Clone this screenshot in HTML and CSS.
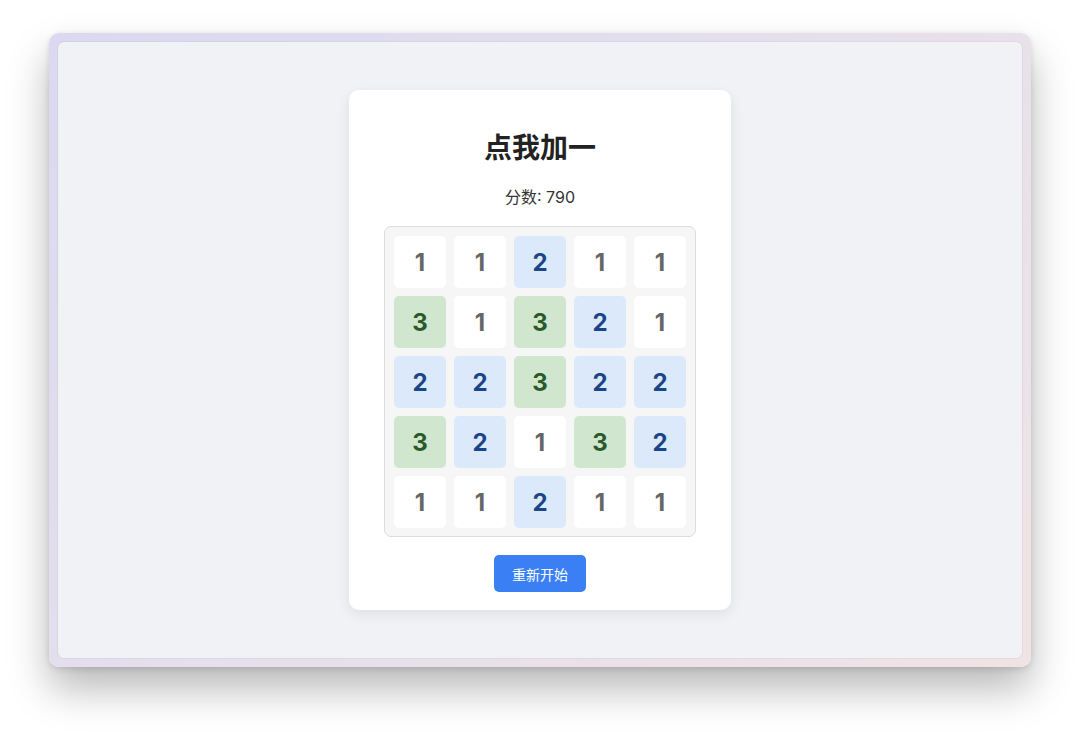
FILE: index.html
```html
<!DOCTYPE html>
<html lang="zh">
<head>
<meta charset="utf-8">
<title>点我加一</title>
<link rel="stylesheet" href="styles.css">
</head>
<body>
<div class="frame">
  <div class="screen">
    <div class="card">
      <h1 class="title">点我加一</h1>
      <div class="score">分数: 790</div>
      <div class="grid">
        <div class="cell c1">1</div><div class="cell c1">1</div><div class="cell c2">2</div><div class="cell c1">1</div><div class="cell c1">1</div>
        <div class="cell c3">3</div><div class="cell c1">1</div><div class="cell c3">3</div><div class="cell c2">2</div><div class="cell c1">1</div>
        <div class="cell c2">2</div><div class="cell c2">2</div><div class="cell c3">3</div><div class="cell c2">2</div><div class="cell c2">2</div>
        <div class="cell c3">3</div><div class="cell c2">2</div><div class="cell c1">1</div><div class="cell c3">3</div><div class="cell c2">2</div>
        <div class="cell c1">1</div><div class="cell c1">1</div><div class="cell c2">2</div><div class="cell c1">1</div><div class="cell c1">1</div>
      </div>
      <button class="restart">重新开始</button>
    </div>
  </div>
</div>
</body>
</html>
```
FILE: styles.css
```css
html, body {
  margin: 0;
  padding: 0;
  background: #ffffff;
}
body {
  width: 1080px;
  height: 732px;
  overflow: hidden;
  font-family: "Inter", "Noto Sans CJK SC", sans-serif;
  padding: 33px 0 0 49px;
  box-sizing: border-box;
}
.frame {
  width: 982px;
  height: 634px;
  box-sizing: border-box;
  padding: 9px;
  border-radius: 10px;
  background: linear-gradient(135deg, #dbd8f0 0%, #e6e0ec 50%, #f0e3e4 100%);
  box-shadow: 0 22px 40px rgba(0, 0, 0, 0.28), 0 2px 6px rgba(0, 0, 0, 0.12);
}
.screen {
  width: 100%;
  height: 100%;
  background: #f0f2f5;
  border-radius: 6px;
  box-shadow: 0 0 0 1px rgba(0, 0, 0, 0.04);
  display: flex;
  align-items: center;
  justify-content: center;
}
.card {
  width: 382px;
  height: 520px;
  box-sizing: border-box;
  background: #ffffff;
  border-radius: 10px;
  box-shadow: 0 4px 14px rgba(0, 0, 0, 0.08);
  display: flex;
  flex-direction: column;
  align-items: center;
  padding-top: 42px;
}
.title {
  margin: 0;
  font-size: 28px;
  line-height: 32px;
  font-weight: 700;
  color: #222222;
}
.score {
  margin-top: 21px;
  font-size: 16px;
  line-height: 24px;
  color: #333333;
}
.grid {
  margin-top: 17px;
  box-sizing: border-box;
  width: 312px;
  height: 311px;
  padding: 9px;
  background: #f6f6f6;
  border: 1px solid #dddddd;
  border-radius: 7px;
  display: grid;
  grid-template-columns: repeat(5, 52px);
  grid-template-rows: repeat(5, 52px);
  gap: 8px;
}
.cell {
  border-radius: 5px;
  display: flex;
  align-items: center;
  justify-content: center;
  font-size: 24px;
  font-weight: 700;
  font-family: "Inter", sans-serif;
}
.c1 {
  background: #ffffff;
  color: #666666;
}
.c2 {
  background: #dbe9fb;
  color: #1c4588;
}
.c3 {
  background: #d0e6cf;
  color: #2a5a2a;
}
.restart {
  margin-top: 18px;
  width: 92px;
  height: 37px;
  border: none;
  border-radius: 5px;
  background: #3b7ff5;
  color: #ffffff;
  font-family: "Inter", "Noto Sans CJK SC", sans-serif;
  font-size: 14px;
  padding: 0;
}
```
